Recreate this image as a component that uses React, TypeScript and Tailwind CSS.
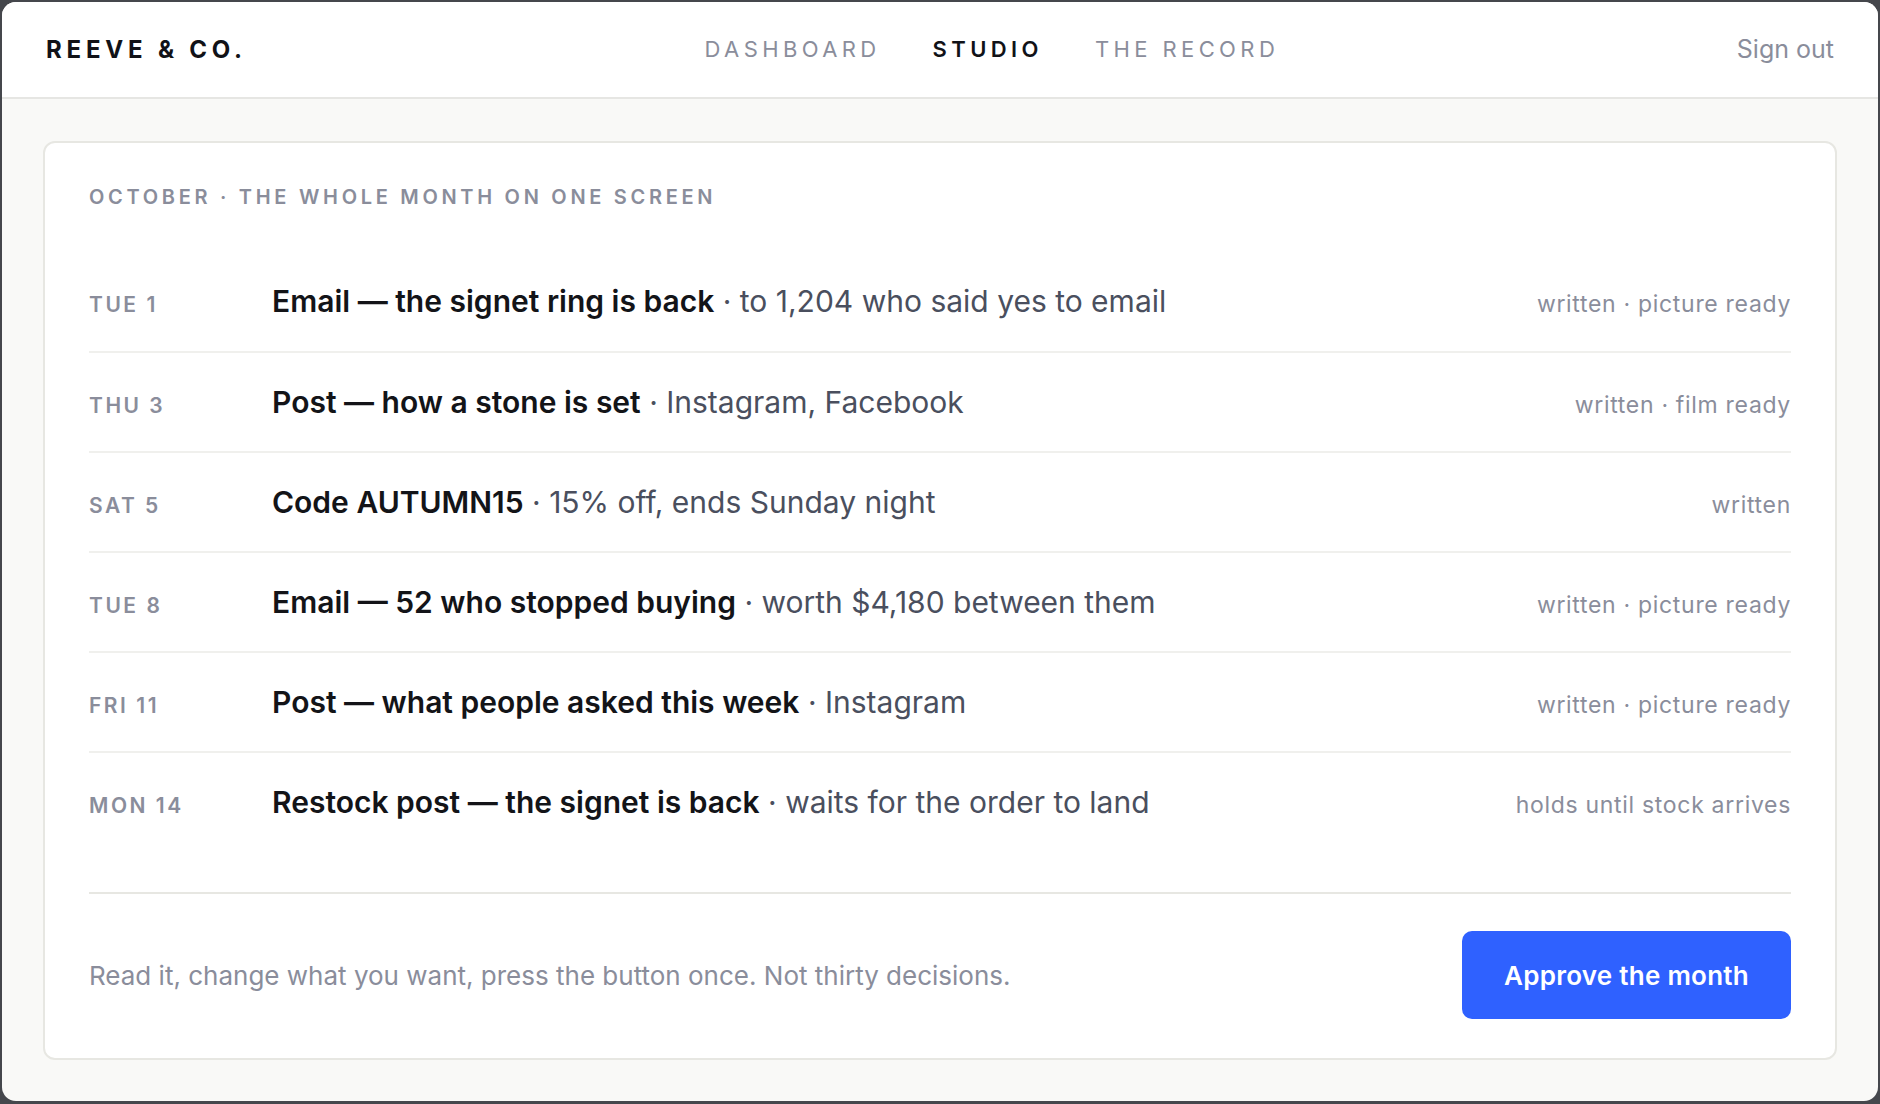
import React from 'react';

const rows = [
    { day: 'TUE 1', title: 'Email — the signet ring is back', detail: 'to 1,204 who said yes to email', status: 'written · picture ready' },
    { day: 'THU 3', title: 'Post — how a stone is set', detail: 'Instagram, Facebook', status: 'written · film ready' },
    { day: 'SAT 5', title: 'Code AUTUMN15', detail: '15% off, ends Sunday night', status: 'written' },
    { day: 'TUE 8', title: 'Email — 52 who stopped buying', detail: 'worth $4,180 between them', status: 'written · picture ready' },
    { day: 'FRI 11', title: 'Post — what people asked this week', detail: 'Instagram', status: 'written · picture ready' },
    { day: 'MON 14', title: 'Restock post — the signet is back', detail: 'waits for the order to land', status: 'holds until stock arrives' },
];

const App = () => {
    return (
        <div className="w-[1880px] h-[1104px] bg-[#45474c] p-[2px] pb-[3px] font-['Inter',sans-serif]">
            <div className="h-full rounded-[14px] overflow-hidden bg-[#f9f9f7] flex flex-col">
                {/* Header */}
                <header className="h-[97px] shrink-0 bg-white border-b-2 border-[#e6e6e3] px-[44px] flex items-center justify-between">
                    <div className="text-[24px] font-bold tracking-[0.2em] text-[#111217]">REEVE &amp; CO.</div>
                    <nav className="flex items-center gap-[52px] text-[22px] tracking-[0.2em]">
                        <a href="#" className="text-[#8a8d9b]">DASHBOARD</a>
                        <a href="#" className="text-[#111217] font-semibold">STUDIO</a>
                        <a href="#" className="text-[#8a8d9b]">THE RECORD</a>
                    </nav>
                    <a href="#" className="text-[25px] text-[#8a8d9b]">Sign out</a>
                </header>

                {/* Main */}
                <main className="px-[41px] pt-[42px]">
                    <section className="bg-white border-2 border-[#e7e7e2] rounded-[12px] px-[44px] pt-[40px] pb-[39px]">
                        <p className="text-[20px] leading-[28px] font-semibold tracking-[0.185em] text-[#8a8d9b]">
                            OCTOBER · THE WHOLE MONTH ON ONE SCREEN
                        </p>

                        <div className="mt-[40px]">
                            {rows.map((row, i) => (
                                <div
                                    key={row.day}
                                    className={`h-[100px] flex items-center ${i > 0 ? 'border-t-2 border-[#f0f0ed]' : ''}`}
                                >
                                    <div className="w-full flex items-baseline">
                                        <div className="w-[183px] shrink-0 text-[21px] font-semibold tracking-[0.12em] text-[#8a8d9b]">{row.day}</div>
                                        <div className="flex-1 text-[30px] text-[#4a4f5e]">
                                            <span className="font-semibold text-[#131418]">{row.title}</span>
                                            <span> · {row.detail}</span>
                                        </div>
                                        <div className="text-[23px] tracking-[0.03em] text-[#8a8d9b]">{row.status}</div>
                                    </div>
                                </div>
                            ))}
                        </div>

                        <div className="mt-[41px] border-t-2 border-[#e7e7e2] pt-[37px] flex items-center justify-between">
                            <p className="text-[26px] text-[#8a8d9b]">Read it, change what you want, press the button once. Not thirty decisions.</p>
                            <button className="h-[88px] px-[42px] rounded-[10px] bg-[#2f61ff] text-white text-[26px] font-semibold tracking-[0.01em]">
                                Approve the month
                            </button>
                        </div>
                    </section>
                </main>
            </div>
        </div>
    );
};

export default App;
